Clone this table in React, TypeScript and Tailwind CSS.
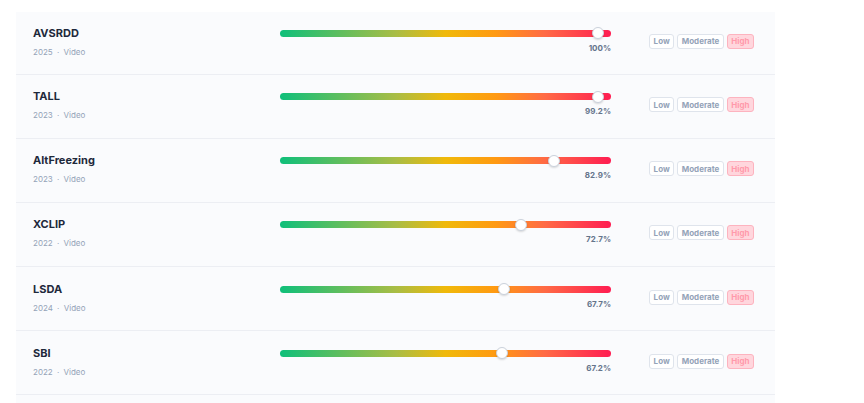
import React from "react";

interface Model {
  name: string;
  year: number;
  type: string;
  score: number;
}

const MODELS: Model[] = [
  { name: "AVSRDD", year: 2025, type: "Video", score: 100 },
  { name: "TALL", year: 2023, type: "Video", score: 99.2 },
  { name: "AltFreezing", year: 2023, type: "Video", score: 82.9 },
  { name: "XCLIP", year: 2022, type: "Video", score: 72.7 },
  { name: "LSDA", year: 2024, type: "Video", score: 67.7 },
  { name: "SBI", year: 2022, type: "Video", score: 67.2 },
];

function ScoreBar({ score }: { score: number }) {
  // thumb stops short of the rounded end
  const pos = Math.min(score, 96);
  return (
    <div className="flex w-[331px] shrink-0 flex-col">
      <div className="relative h-[7px] w-full rounded-full bg-[linear-gradient(to_right,#0fbf7a_0%,#a9bd45_35%,#f0b90a_50%,#ff9a12_65%,#ff6a45_80%,#ff1d52_100%)]">
        <div
          className="absolute top-1/2 h-[12px] w-[12px] -translate-x-1/2 -translate-y-1/2 rounded-full border-[1.5px] border-[#cbd2dc] bg-white shadow-[0_1px_2px_rgba(0,0,0,0.15)]"
          style={{ left: `${pos}%` }}
        />
      </div>
      <span className="mt-[6px] self-end text-[8px] font-bold leading-[10px] text-[#64748b]">
        {score}%
      </span>
    </div>
  );
}

function Badges() {
  return (
    <div className="flex items-center gap-[3px]">
      <span className="flex h-[15px] items-center rounded-[3px] border border-[#dfe4ec] bg-white px-[3.5px] text-[8px] font-bold text-[#94a3b8]">
        Low
      </span>
      <span className="flex h-[15px] items-center rounded-[3px] border border-[#dfe4ec] bg-white px-[3.5px] text-[8px] font-bold text-[#94a3b8]">
        Moderate
      </span>
      <span className="flex h-[15px] items-center rounded-[3px] border border-[#fdb3bf] bg-[#ffd6dd] px-[3.5px] text-[8px] font-bold text-[#ff9aab]">
        High
      </span>
    </div>
  );
}

export default function App() {
  return (
    <div className="h-[403px] overflow-hidden bg-white pl-[16px] pt-[12px] font-['Inter',sans-serif]">
      <div className="w-[759px] bg-[#fafbfd] pb-[20px]">
        {MODELS.map((m) => (
          <div
            key={m.name}
            className="flex h-[64.2px] items-center border-b border-[#eceef3] pb-[3px] pl-[17px] pr-[21px] first:h-[62.5px]"
          >
            <div className="flex w-[247px] shrink-0 flex-col">
              <span className="text-[11px] font-bold leading-[14px] text-[#1e293b]">
                {m.name}
              </span>
              <span className="mt-[7px] text-[8px] leading-[10px] text-[#94a3b8]">
                {m.year} <span className="mx-[2px]">·</span> {m.type}
              </span>
            </div>
            <ScoreBar score={m.score} />
            <div className="ml-auto">
              <Badges />
            </div>
          </div>
        ))}
      </div>
    </div>
  );
}
